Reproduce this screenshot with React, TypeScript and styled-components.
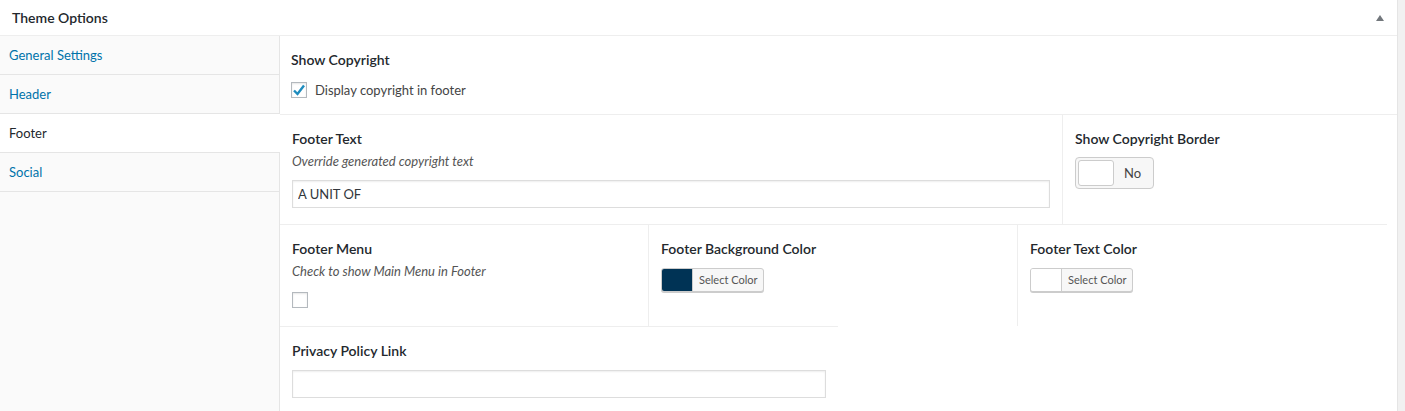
import React from "react";
import styled, { createGlobalStyle } from "styled-components";

const GlobalStyle = createGlobalStyle`
  html, body {
    margin: 0;
    padding: 0;
    background: #f1f1f1;
  }
  body {
    font-family: "Segoe UI", Lato, "Liberation Sans", sans-serif;
    font-size: 13px;
    color: #444;
  }
`;

const Panel = styled.div`
  width: 1397px;
  min-height: 411px;
  background: #fff;
  border-right: 1px solid #e5e5e5;
  display: flex;
  flex-direction: column;
`;

const PanelHeader = styled.div`
  height: 35px;
  border-bottom: 1px solid #eee;
  display: flex;
  align-items: center;
  justify-content: space-between;
  padding: 0 13px 0 12px;
`;

const PanelTitle = styled.h2`
  margin: 0;
  font-size: 14px;
  font-weight: 600;
  color: #23282d;
`;

const Toggle = styled.span`
  width: 0;
  height: 0;
  border-left: 4px solid transparent;
  border-right: 4px solid transparent;
  border-bottom: 6px solid #72777c;
  margin-top: 1px;
`;

const Body = styled.div`
  flex: 1;
  display: flex;
`;

const Sidebar = styled.ul`
  width: 279px;
  margin: 0;
  padding: 0;
  list-style: none;
  background: #fafafa;
  border-right: 1px solid #e5e5e5;
`;

const MenuItem = styled.li<{ $active?: boolean }>`
  height: 38px;
  line-height: 38px;
  padding: 0 9px;
  border-bottom: 1px solid #e5e5e5;
  color: ${(p) => (p.$active ? "#23282d" : "#0073aa")};
  background: ${(p) => (p.$active ? "#fff" : "transparent")};
  margin-right: ${(p) => (p.$active ? "-1px" : "0")};
  position: relative;
`;

const Content = styled.div`
  flex: 1;
  display: flex;
  flex-direction: column;
`;

const FullRow = styled.div`
  border-bottom: 1px solid #eee;
  padding: 14px 11px 16px;
`;

const Row = styled.div<{ $cols: string; $bordered?: boolean }>`
  width: 1107px;
  display: grid;
  grid-template-columns: ${(p) => p.$cols};
  border-bottom: ${(p) => (p.$bordered ? "1px solid #eee" : "none")};
`;

const Cell = styled.div<{ $divider?: boolean; $bottom?: number }>`
  padding: 14px 12px ${(p) => p.$bottom ?? 16}px 12px;
  border-right: ${(p) => (p.$divider ? "1px solid #eee" : "none")};
`;

const LastSection = styled.div`
  width: 534px;
  border-top: 1px solid #eee;
  padding: 14px 12px 14px;
`;

const Heading = styled.h3`
  margin: 0;
  font-size: 14px;
  line-height: 20px;
  font-weight: 600;
  color: #23282d;
`;

const Description = styled.p`
  margin: 2px 0 0;
  font-style: italic;
  line-height: 20px;
  color: #555;
`;

const TextInput = styled.input`
  display: block;
  box-sizing: border-box;
  width: 100%;
  height: 28px;
  margin-top: 9px;
  padding: 0 5px;
  border: 1px solid #ddd;
  box-shadow: inset 0 1px 2px rgba(0, 0, 0, 0.07);
  font-family: inherit;
  font-size: 13px;
  color: #32373c;
  outline: none;
`;

const CheckLabel = styled.label`
  display: flex;
  align-items: center;
  gap: 8px;
  margin-top: 12px;
  color: #444;
`;

const Box = styled.span<{ $gap?: number }>`
  box-sizing: border-box;
  width: 16px;
  height: 16px;
  margin-top: ${(p) => p.$gap ?? 0}px;
  border: 1px solid #b4b9be;
  box-shadow: inset 0 1px 2px rgba(0, 0, 0, 0.1);
  background: #fff;
  display: flex;
  align-items: center;
  justify-content: center;
`;

const Switch = styled.div`
  box-sizing: border-box;
  margin-top: 8px;
  width: 79px;
  height: 32px;
  border: 1px solid #ccc;
  border-radius: 4px;
  background: #f7f7f7;
  display: flex;
  align-items: center;
  padding: 0 2px;
`;

const Knob = styled.span`
  box-sizing: border-box;
  width: 36px;
  height: 26px;
  border: 1px solid #ccc;
  border-radius: 3px;
  background: #fff;
`;

const SwitchText = styled.span`
  flex: 1;
  text-align: center;
  color: #444;
`;

const ColorButton = styled.div`
  box-sizing: border-box;
  margin-top: 9px;
  height: 24px;
  display: inline-flex;
  border: 1px solid #ccc;
  border-radius: 3px;
  background: #f7f7f7;
  box-shadow: 0 1px 0 #ccc;
  overflow: hidden;
`;

const Swatch = styled.span<{ $color: string }>`
  width: 30px;
  background: ${(p) => p.$color};
  border-right: 1px solid #ccc;
`;

const ColorLabel = styled.span`
  padding: 0 6px;
  font-size: 11px;
  line-height: 22px;
  color: #555;
`;

const Check = () => (
  <svg width="14" height="14" viewBox="0 0 14 14">
    <path d="M2 7.5 L5.5 11 L12 2.5" fill="none" stroke="#1e8cbe" strokeWidth="2.4" />
  </svg>
);

const ColorPicker = ({ color }: { color: string }) => (
  <ColorButton>
    <Swatch $color={color} />
    <ColorLabel>Select Color</ColorLabel>
  </ColorButton>
);

export default function App() {
  return (
    <>
      <GlobalStyle />
      <Panel>
        <PanelHeader>
          <PanelTitle>Theme Options</PanelTitle>
          <Toggle />
        </PanelHeader>
        <Body>
          <Sidebar>
            <MenuItem>General Settings</MenuItem>
            <MenuItem>Header</MenuItem>
            <MenuItem $active>Footer</MenuItem>
            <MenuItem>Social</MenuItem>
          </Sidebar>
          <Content>
            <FullRow>
              <Heading>Show Copyright</Heading>
              <CheckLabel>
                <Box>
                  <Check />
                </Box>
                Display copyright in footer
              </CheckLabel>
            </FullRow>
            <Row $cols="783px 1fr" $bordered>
              <Cell $divider>
                <Heading>Footer Text</Heading>
                <Description>Override generated copyright text</Description>
                <TextInput defaultValue="A UNIT OF" />
              </Cell>
              <Cell>
                <Heading>Show Copyright Border</Heading>
                <Switch>
                  <Knob />
                  <SwitchText>No</SwitchText>
                </Switch>
              </Cell>
            </Row>
            <Row $cols="369px 369px 1fr">
              <Cell $divider $bottom={18}>
                <Heading>Footer Menu</Heading>
                <Description>Check to show Main Menu in Footer</Description>
                <Box $gap={11} />
              </Cell>
              <Cell $divider $bottom={18}>
                <Heading>Footer Background Color</Heading>
                <ColorPicker color="#003355" />
              </Cell>
              <Cell $bottom={18}>
                <Heading>Footer Text Color</Heading>
                <ColorPicker color="#ffffff" />
              </Cell>
            </Row>
            <LastSection>
              <Heading>Privacy Policy Link</Heading>
              <TextInput />
            </LastSection>
          </Content>
        </Body>
      </Panel>
    </>
  );
}
